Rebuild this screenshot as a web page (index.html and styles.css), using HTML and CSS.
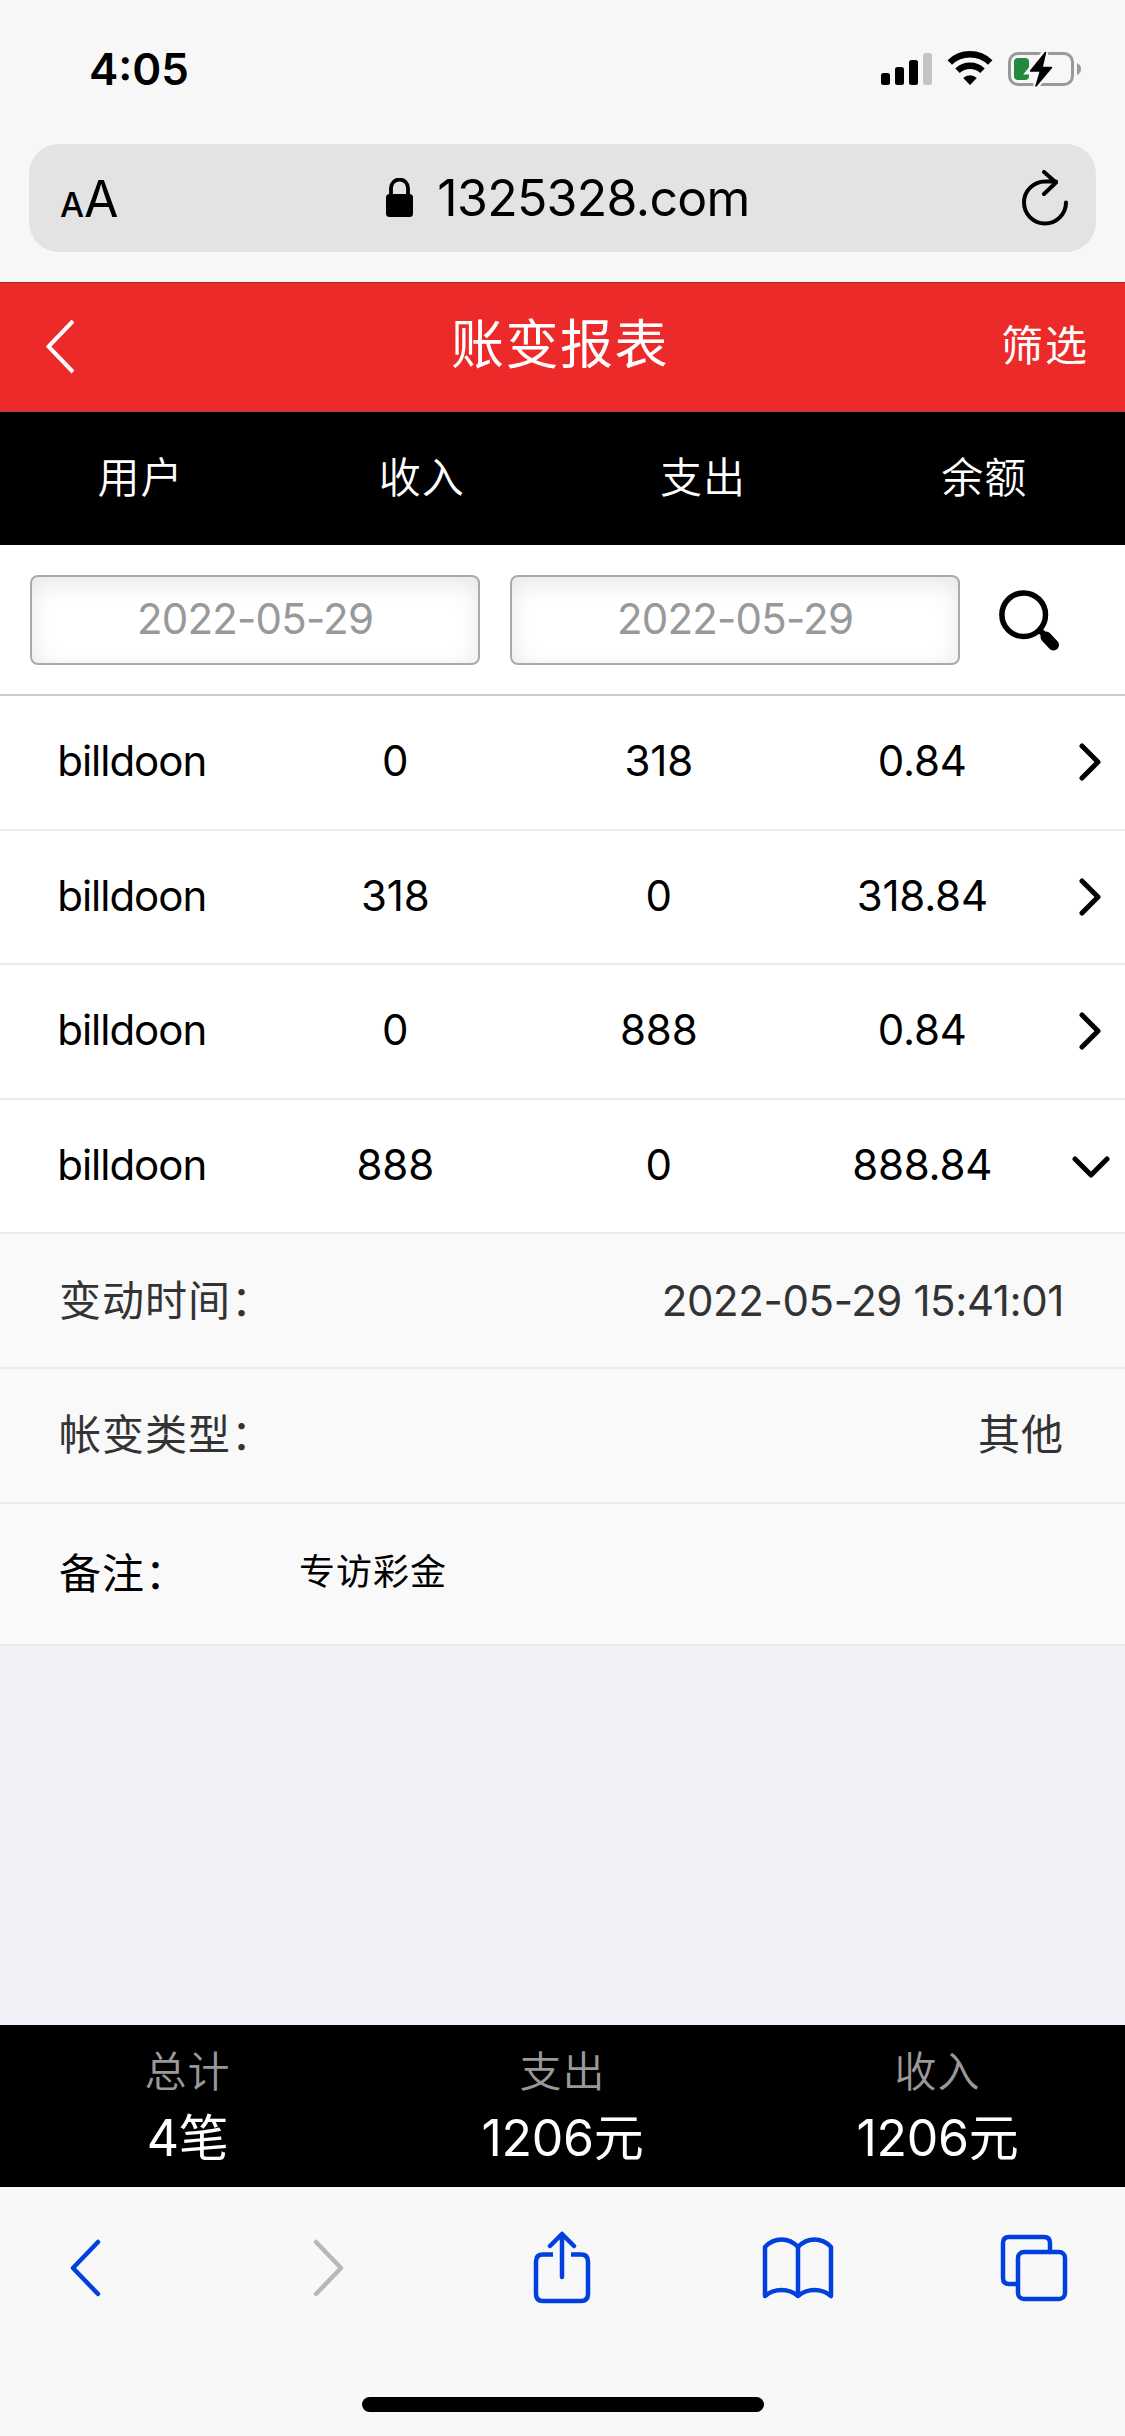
FILE: index.html
```html
<!DOCTYPE html>
<html lang="zh-CN">
<head>
  <meta charset="UTF-8" />
  <meta name="viewport" content="width=device-width, initial-scale=1" />
  <title>账变报表</title>
  <link rel="stylesheet" href="styles.css">
</head>
<body>
  <div class="status-bar">
    <span class="time">4:05</span>
    <div class="status-icons">
      <svg class="signal" width="51" height="36" viewBox="0 0 51 36">
        <rect x="0" y="22" width="9" height="12" rx="2.5" />
        <rect x="14" y="16" width="9" height="18" rx="2.5" />
        <rect x="28" y="9" width="9" height="25" rx="2.5" />
        <rect x="42" y="2" width="9" height="32" rx="2.5" fill="#c4c4c4" />
      </svg>
      <svg class="wifi" width="46" height="36" viewBox="0 0 46 36">
        <path d="M2.800 11.500a29 29 0 0 1 40.400 0" fill="none" stroke="#000" stroke-width="6.400" />
        <path d="M10.500 19.800a18 18 0 0 1 25 0" fill="none" stroke="#000" stroke-width="6.400" />
        <path d="M23 34l-6.800-7a10 10 0 0 1 13.600 0z" />
      </svg>
      <svg class="battery" width="74" height="38" viewBox="0 0 74 38">
        <rect x="1.500" y="3.500" width="63" height="31" rx="8.500" fill="none" stroke="#999" stroke-width="3" />
        <path d="M69 13q4 2 4 6t-4 6z" fill="#999" />
        <rect x="6" y="8" width="15" height="22" rx="4" fill="#248a3d" />
        <path d="M37.500 2L21.500 21.500h10L28 36 44 17.500H34z" stroke="#f7f7f7" stroke-width="6" />
        <path d="M37.500 2.500L22.500 21h10L28 36 43.500 17.500H34z" stroke="#000" stroke-width="1.500" stroke-linejoin="round" />
      </svg>
    </div>
  </div>

  <div class="address-wrap">
    <div class="address-bar">
      <div class="text-size"><span class="small-a">A</span><span class="big-a">A</span></div>
      <div class="site">
        <svg width="27" height="40" viewBox="0 0 27 40">
          <rect x="0" y="16" width="27" height="23" rx="3.500" />
          <path d="M5 18v-8a8.500 8.500 0 0 1 17 0v8" fill="none" stroke="#000" stroke-width="3.800" />
        </svg>
        <span>1325328.com</span>
      </div>
      <svg class="reload" width="46" height="56" viewBox="0 0 46 56">
        <path d="M44 32.500a21 21 0 1 1-21-21h11M22 2l12 10.500L22 24" />
      </svg>
    </div>
  </div>

  <header class="title-bar">
    <svg class="back" width="29" height="54" viewBox="0 0 29 54"><path d="M27 1L2.500 26.500 27 52" /></svg>
    <h1>账变报表</h1>
    <a class="filter">筛选</a>
  </header>

  <div class="table-head">
    <span>用户</span><span>收入</span><span>支出</span><span>余额</span>
  </div>

  <div class="search-row">
    <div class="date-input">2022-05-29</div>
    <div class="date-input">2022-05-29</div>
    <svg class="search" width="62" height="62" viewBox="0 0 62 62">
      <circle cx="24.700" cy="25.700" r="21.800" fill="none" stroke="#000" stroke-width="5.500" />
      <path d="M39 39l7 8" stroke="#000" stroke-width="6" />
      <path d="M47 48l7.500 8" stroke="#000" stroke-width="11" stroke-linecap="round" />
    </svg>
  </div>

  <main class="list">
    <div class="row">
      <span class="user">billdoon</span><span>0</span><span>318</span><span>0.84</span>
      <svg class="arrow" width="38" height="38" viewBox="0 0 38 38"><path d="M10 3l16 16-16 16" /></svg>
    </div>
    <div class="row">
      <span class="user">billdoon</span><span>318</span><span>0</span><span>318.84</span>
      <svg class="arrow" width="38" height="38" viewBox="0 0 38 38"><path d="M10 3l16 16-16 16" /></svg>
    </div>
    <div class="row">
      <span class="user">billdoon</span><span>0</span><span>888</span><span>0.84</span>
      <svg class="arrow" width="38" height="38" viewBox="0 0 38 38"><path d="M10 3l16 16-16 16" /></svg>
    </div>
    <div class="row">
      <span class="user">billdoon</span><span>888</span><span>0</span><span>888.84</span>
      <svg class="arrow" width="38" height="38" viewBox="0 0 38 38"><path d="M3 12l16 16 16-16" /></svg>
    </div>
    <div class="detail">
      <span class="label">变动时间：</span>
      <span class="value">2022-05-29 15:41:01</span>
    </div>
    <div class="detail">
      <span class="label">帐变类型：</span>
      <span class="cn">其他</span>
    </div>
    <div class="detail remark">
      <span class="label">备注：</span>
      <span class="note">专访彩金</span>
    </div>
  </main>

  <footer class="totals">
    <div class="total"><span>总计</span><b>4笔</b></div>
    <div class="total"><span>支出</span><b>1206元</b></div>
    <div class="total"><span>收入</span><b>1206元</b></div>
  </footer>

  <nav class="toolbar">
    <svg width="32" height="58" viewBox="0 0 32 58"><path d="M29 3L4 29l25 26" /></svg>
    <svg class="disabled" width="32" height="58" viewBox="0 0 32 58"><path d="M4 3l25 26L4 55" /></svg>
    <svg width="58" height="74" viewBox="0 0 58 74">
      <path d="M20 23.500H10q-7 0-7 7V63q0 7 7 7h38q7 0 7-7V30.500q0-7-7-7H38" stroke-linecap="butt" />
      <path d="M29 46V3M17 15L29 3l12 12" />
    </svg>
    <svg width="72" height="64" viewBox="0 0 72 64">
      <path d="M36 11v49M36 11Q29 3.500 19.500 3.500T3 11v49q7-6 16.500-6T36 60q7-6 16.500-6T69 60V11Q62 3.500 52.500 3.500T36 11" />
    </svg>
    <svg width="68" height="68" viewBox="0 0 68 68">
      <rect x="18" y="18" width="47" height="47" rx="6" />
      <path d="M50 18V9q0-6-6-6H9Q3 3 3 9v35q0 6 6 6h9" />
    </svg>
  </nav>
  <div class="home-area"><div class="home-indicator"></div></div>
</body>
</html>
```
FILE: styles.css
```css
* {
  box-sizing: border-box;
}
body {
  margin: 0;
  height: 2436px;
  display: flex;
  flex-direction: column;
  background: #f2f1f7;
  color: #000;
  font-family: Inter, "Noto Sans CJK SC", sans-serif;
  font-size: 42px;
  line-height: 1;
}
svg {
  display: block;
  flex: none;
}
.status-bar {
  height: 144px;
  padding: 0 43px 6px 89px;
  display: flex;
  align-items: center;
  justify-content: space-between;
  background: #f7f7f7;
}
.time {
  font-size: 44px;
  font-weight: 600;
}
.status-icons {
  display: flex;
  align-items: center;
  gap: 15px;
}
.address-wrap {
  height: 138px;
  padding: 0 29px;
  background: #f7f7f7;
}
.address-bar {
  height: 108px;
  padding: 0 28px 0 31px;
  display: flex;
  align-items: center;
  justify-content: space-between;
  background: #e3e3e3;
  border-radius: 30px;
}
.text-size {
  width: 60px;
  padding-top: 2px;
  display: flex;
  align-items: baseline;
}
.small-a {
  font-size: 34px;
  font-weight: 500;
}
.big-a {
  font-size: 50px;
}
.site {
  display: flex;
  align-items: center;
  gap: 24px;
  margin-right: 6px;
  font-size: 50px;
  letter-spacing: -0.7px;
}
.reload path {
  fill: none;
  stroke: #000;
  stroke-width: 4;
  stroke-linecap: round;
  stroke-linejoin: round;
}
.title-bar {
  height: 130px;
  padding: 0 36px 0 46px;
  display: flex;
  align-items: center;
  justify-content: space-between;
  background: #ed2a2a;
  border-top: 1px solid #a92626;
  border-bottom: 1px solid #984646;
  color: #fff;
}
.title-bar h1 {
  margin: 0 0 3px 44px;
  font-size: 53px;
  font-weight: 400;
  letter-spacing: 1.5px;
}
.filter {
  margin-bottom: 2px;
  font-size: 42px;
  letter-spacing: 2px;
}
.back path {
  fill: none;
  stroke: #fff;
  stroke-width: 4;
}
.table-head {
  height: 133px;
  padding-bottom: 2px;
  display: flex;
  align-items: center;
  background: #000;
  color: #fff;
  letter-spacing: 1px;
  font-weight: 350;
}
.table-head span {
  flex: 1;
  text-align: center;
}
.search-row {
  height: 151px;
  padding-left: 30px;
  display: flex;
  align-items: center;
  gap: 30px;
  background: #fff;
  border-bottom: 2px solid #ccc;
}
.date-input {
  width: 450px;
  height: 90px;
  padding-bottom: 2px;
  display: flex;
  align-items: center;
  justify-content: center;
  border: 2px solid #aaa;
  border-radius: 8px;
  box-shadow: inset 0 6px 24px #e6e6e6;
  color: #999;
  letter-spacing: -0.8px;
}
.search {
  margin-left: 9px;
}
.row {
  height: 134.6px;
  display: flex;
  align-items: center;
  background: #fff;
  border-bottom: 2px solid #eaeaea;
}
.row span {
  width: 263.5px;
  padding-bottom: 2px;
  text-align: center;
  letter-spacing: -0.2px;
}
.row .user {
  letter-spacing: -1px;
}
.arrow {
  margin-left: 18px;
}
.arrow path {
  fill: none;
  stroke: #000;
  stroke-width: 5;
  stroke-linecap: round;
  stroke-linejoin: round;
}
.detail {
  height: 134.6px;
  padding: 0 61px 0 59px;
  display: flex;
  align-items: center;
  justify-content: space-between;
  background: #f9f9f9;
  border-bottom: 2px solid #eaeaea;
  color: #333;
}
.label,
.cn {
  letter-spacing: 1px;
}
.value {
  letter-spacing: -0.4px;
}
.remark {
  height: 142px;
  justify-content: flex-start;
  color: #000;
}
.remark .label {
  width: 240px;
}
.note {
  padding-bottom: 3px;
  font-size: 36px;
  letter-spacing: 1px;
}
.totals {
  height: 162px;
  margin-top: auto;
  display: flex;
  background: #000;
  color: #fff;
}
.total {
  flex: 1;
  padding-top: 26px;
  display: flex;
  flex-direction: column;
  align-items: center;
  gap: 20px;
}
.total span {
  color: #999;
  font-weight: 350;
  letter-spacing: 1px;
}
.total b {
  font-size: 50px;
  font-weight: 400;
  letter-spacing: -0.3px;
}
.toolbar {
  height: 162px;
  padding-left: 69px;
  display: grid;
  grid-template-columns: 243px 221px 229px 238px 68px;
  align-items: center;
  background: #f8f8f8;
}
.toolbar svg {
  fill: none;
  stroke: #0040dd;
  stroke-width: 4.5;
  stroke-linecap: round;
  stroke-linejoin: round;
}
.toolbar .disabled {
  stroke: #b8b8b8;
}
.home-area {
  height: 87px;
  padding-top: 48px;
  background: #f8f8f8;
}
.home-indicator {
  width: 402px;
  height: 15px;
  margin: 0 auto;
  border-radius: 8px;
  background: #000;
}
```
